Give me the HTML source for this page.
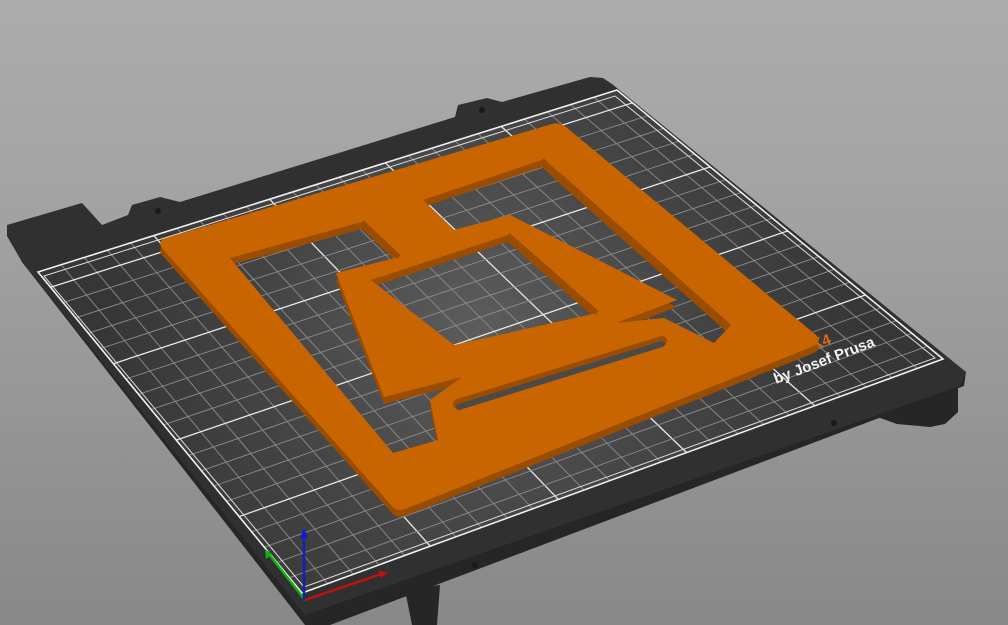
<!DOCTYPE html>
<html><head><meta charset="utf-8"><style>
html,body{margin:0;padding:0;width:1008px;height:625px;overflow:hidden}
body{background:linear-gradient(#acacac 0%,#a2a2a2 35%,#888 100%)}
svg{display:block}
</style></head><body>
<svg width="1008" height="625" viewBox="0 0 1008 625" xmlns="http://www.w3.org/2000/svg">
<defs>
<radialGradient id="gg" cx="480" cy="330" r="380" gradientUnits="userSpaceOnUse">
<stop offset="0" stop-color="#5c5c5c"/><stop offset="0.6" stop-color="#434343"/><stop offset="1" stop-color="#363636"/>
</radialGradient>
</defs>
<!-- feet -->
<polygon points="870,400 958,385 958,412 945,424 930,427 897,424 880,418" fill="#262626"/>
<polygon points="405,590 440,585 437,625 412,625" fill="#262626"/>
<!-- bed front thickness -->
<polygon points="7,230 22,262 305,625 330,625 964,386 966,372 305,612" fill="#262626"/>
<!-- bed top -->
<polygon points="7,225 82,203 102,225 128,215 132,205 160,197 180,202 455,117 458,105 487,98 502,102 590,77 603,78 612,84 966,372 960,386 305,615 22,262 7,236" fill="#303030"/>
<!-- grid area -->
<polygon points="38,272 617,90 943,359 302,593" fill="url(#gg)"/>
<g id="grid" stroke-width="1"></g>
<polygon points="38,272 617,90 943,359 302,593" fill="none" stroke="#f0f0f0" stroke-width="1.6"/>
<polygon points="44,276 615,96 935,358 304,587" fill="none" stroke="#dcdcdc" stroke-width="1"/>
<!-- text -->
<text x="0" y="0" transform="translate(776,384) rotate(-21)" font-family="Liberation Sans, sans-serif" font-weight="bold" font-size="15" fill="#f2f2f2">by Josef Prusa</text>
<text x="0" y="0" transform="translate(814,350) rotate(-21)" font-family="Liberation Sans, sans-serif" font-weight="bold" font-size="15" fill="#e06a10">K4</text>
<!-- orange part side -->
<g transform="translate(0,7)">
<path fill="#9a4c00" fill-rule="evenodd" d="M161,247 Q158,240 166,238 L552,124 Q560,122 566,127 L816,335 Q822,342 814,346 L405,509 Q396,512 391,505 Z
M230,258 L362,222 L399,257 L336,273 L384,397 L462,377 L430,400 L438,440 L393,453 Z
M423,200 L542,160 L558,175 L729,327 L714,343 L664,318 L616,323 L677,300 L510,215 L454,230 Z
M371,280 L508,235 L597,313 L454,345 Z"/>
</g>
<path fill="#c96500" fill-rule="evenodd" d="M161,247 Q158,240 166,238 L552,124 Q560,122 566,127 L816,335 Q822,342 814,346 L405,509 Q396,512 391,505 Z
M230,258 L362,222 L399,257 L336,273 L384,397 L462,377 L430,400 L438,440 L393,453 Z
M423,200 L542,160 L558,175 L729,327 L714,343 L664,318 L616,323 L677,300 L510,215 L454,230 Z
M371,280 L508,235 L597,313 L454,345 Z"/>
<polyline points="362,222 368,228 399,257" fill="none" stroke="#9a4c00" stroke-width="5"/>
<polyline points="542,160 548,166 558,175" fill="none" stroke="#9a4c00" stroke-width="5"/>
<polyline points="558,175 729,327" fill="none" stroke="#9a4c00" stroke-width="6"/>
<polyline points="508,235 597,313" fill="none" stroke="#9a4c00" stroke-width="5"/>
<line x1="458" y1="404" x2="662" y2="341" stroke="#9a4c00" stroke-width="10" stroke-linecap="round"/>
<line x1="459" y1="407" x2="662" y2="344" stroke="#4a4a4a" stroke-width="6" stroke-linecap="round"/>
<!-- axes -->
<line x1="305" y1="600" x2="384" y2="573" stroke="#c01010" stroke-width="2.5"/>
<polygon points="388,572 378,571 381,578" fill="#c01010"/>
<line x1="305" y1="600" x2="268" y2="553" stroke="#10b010" stroke-width="2.5"/>
<polygon points="265,549 266,559 272,554" fill="#10b010"/>
<line x1="304" y1="600" x2="304" y2="534" stroke="#1020c0" stroke-width="2.5"/>
<polygon points="304,528 300,538 308,538" fill="#1020c0"/>
<circle cx="475" cy="565" r="3" fill="#1a1a1a"/>
<circle cx="834" cy="423" r="3" fill="#1a1a1a"/>
<circle cx="158" cy="211" r="3" fill="#1a1a1a"/>
<circle cx="482" cy="110" r="3" fill="#1a1a1a"/>
</svg>
<script>
(function(){
var O=[302,593],X=[943,359],Y=[38,272],T=[617,90];
function P(u,v){
 var a=[O[0]+(X[0]-O[0])*u,O[1]+(X[1]-O[1])*u], b=[Y[0]+(T[0]-Y[0])*u,Y[1]+(T[1]-Y[1])*u];
 return [a[0]+(b[0]-a[0])*v,a[1]+(b[1]-a[1])*v];}
var g=document.getElementById('grid'),s='';
for(var i=1;i<25;i++){var u=i/25,p=P(u,0),q=P(u,1),m=i%5==0;
 s+='<line x1="'+p[0]+'" y1="'+p[1]+'" x2="'+q[0]+'" y2="'+q[1]+'" stroke="'+(m?'#e8e8e8':'#8c8c8c')+'" stroke-width="'+(m?1.3:0.9)+'"/>';}
for(var j=1;j<21;j++){var v=j/21,p=P(0,v),q=P(1,v),m=j%5==0;
 s+='<line x1="'+p[0]+'" y1="'+p[1]+'" x2="'+q[0]+'" y2="'+q[1]+'" stroke="'+(m?'#e8e8e8':'#8c8c8c')+'" stroke-width="'+(m?1.3:0.9)+'"/>';}
g.innerHTML=s;
})();
</script>
</body></html>
